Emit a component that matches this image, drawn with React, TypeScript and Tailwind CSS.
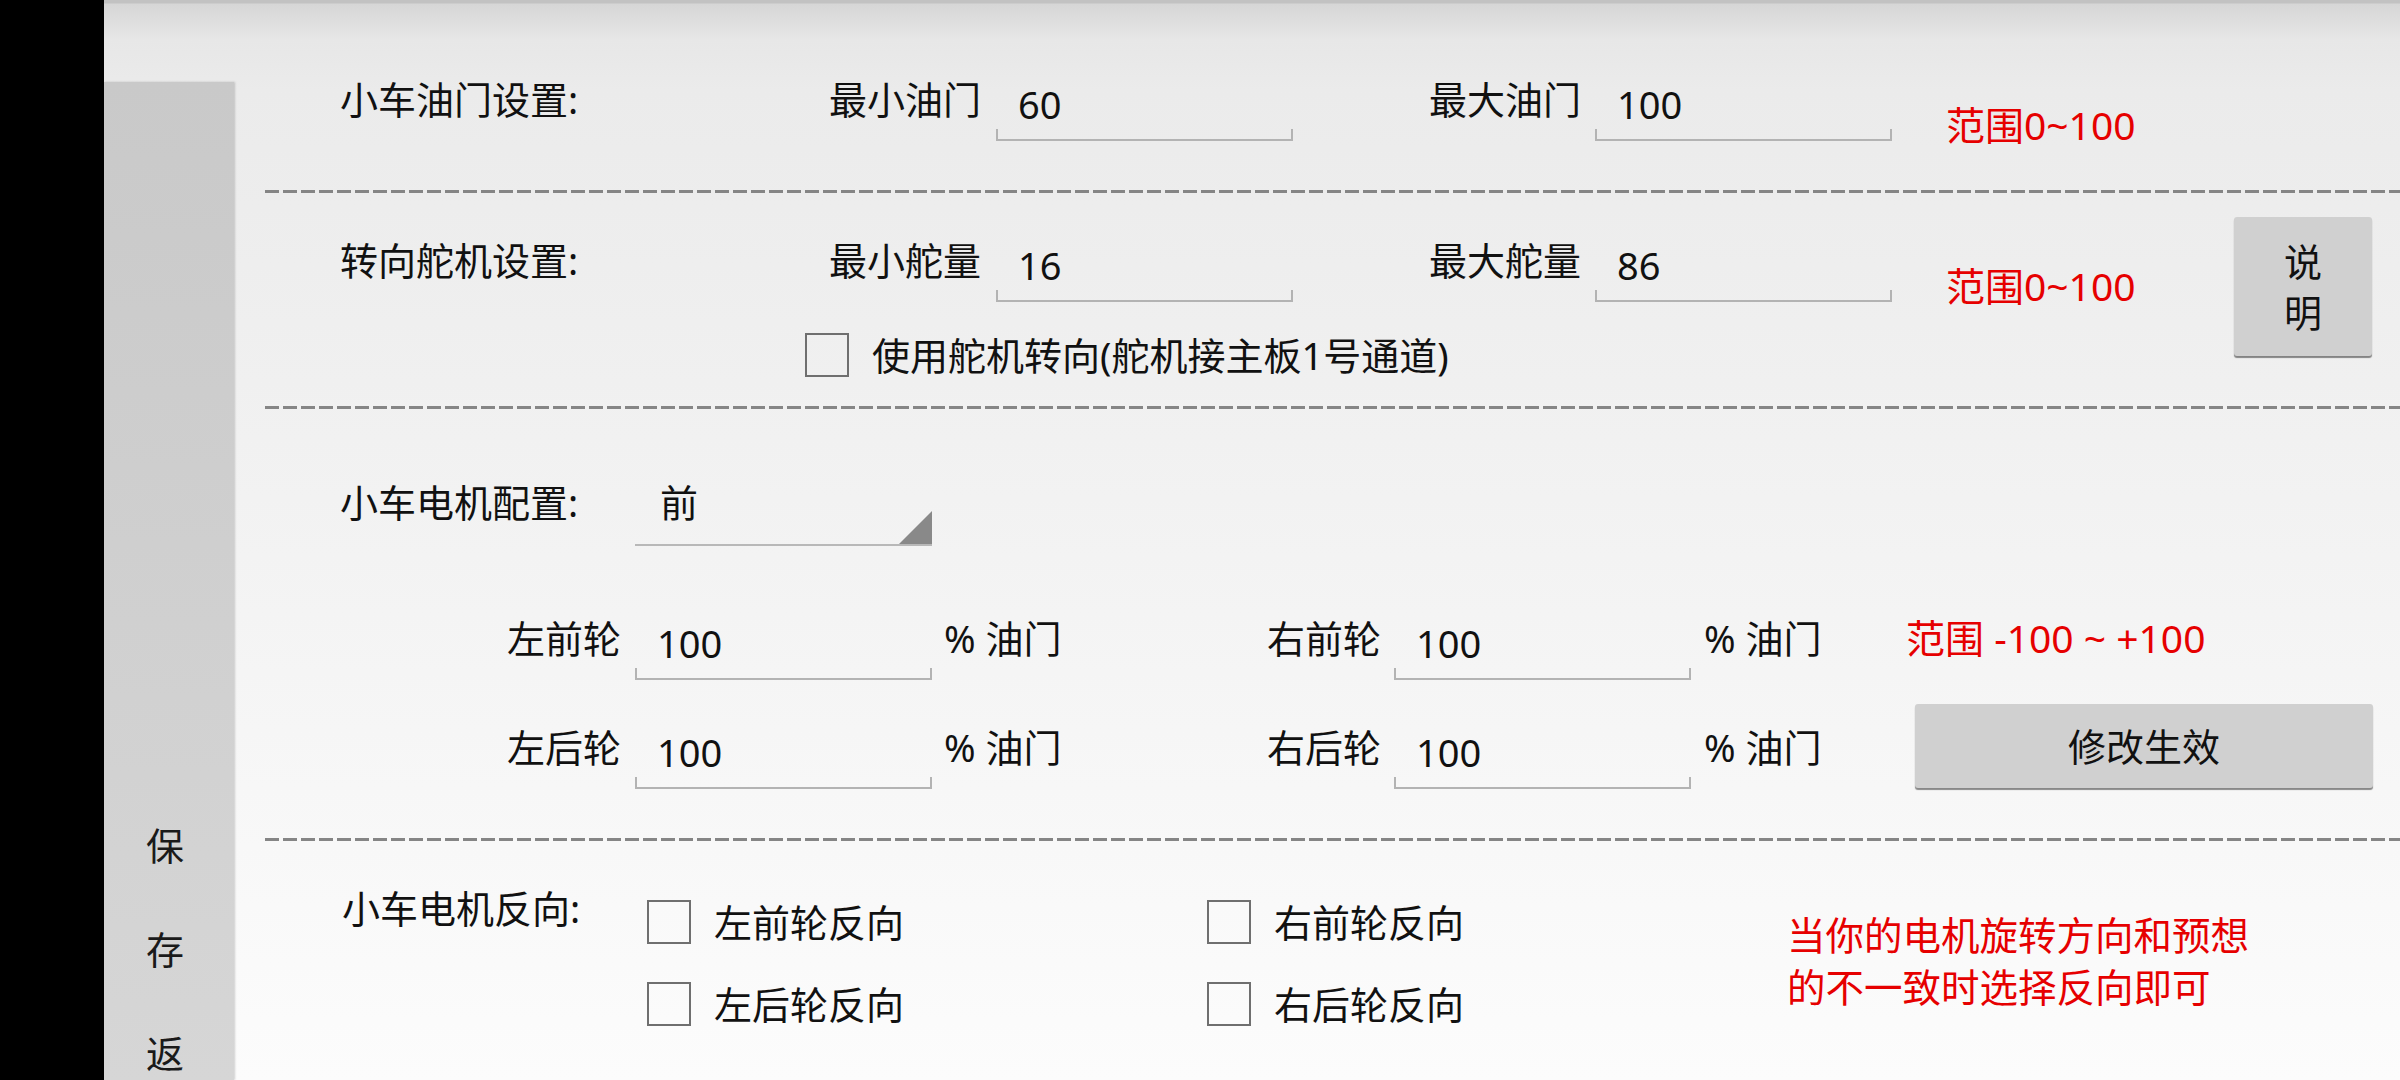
const Label = ({ text, className = "" }: { text: string; className?: string }) => (
  <div className={`shrink-0 leading-[50px] ${className}`}>{text}</div>
);

// EditText with the android underline + end ticks
const Field = ({ value }: { value: string }) => (
  <div className="flex w-[297px] shrink-0 flex-col">
    <div className="mt-[5px] h-[50px] pl-[22px] leading-[50px]">{value}</div>
    <div className="h-[12px] border-x-2 border-b-2 border-[#b3b3b3]" />
  </div>
);

const Box = () => <div className="h-[44px] w-[44px] shrink-0 border-2 border-[#6f6f6f]" />;

const Check = ({ label }: { label: string }) => (
  <div className="flex w-[560px] items-center">
    <Box />
    <span className="ml-[23px] leading-[50px]">{label}</span>
  </div>
);

const Divider = () => (
  <div className="h-[3px] shrink-0 bg-[repeating-linear-gradient(to_right,#858585_0px,#858585_14px,transparent_14px,transparent_18px)]" />
);

export default function App() {
  return (
    <div className="flex h-[1080px] w-[2400px] overflow-hidden whitespace-nowrap bg-black font-['Noto_Sans','Noto_Sans_CJK_SC',sans-serif] text-[38px] text-[#111]">
      <div className="w-[104px] shrink-0 bg-black" />

      <div className="flex flex-1 bg-[linear-gradient(to_bottom,#c2c2c2_0px,#c2c2c2_3px,#d6d6d6_4px,#e7e7e7_40px,#ebebeb_90px,#fcfcfc_1080px)]">
        {/* Side bar */}
        <aside className="mt-[82px] flex w-[130px] shrink-0 flex-col items-center overflow-hidden bg-gradient-to-b from-[#c9c9c9] to-[#d6d6d6] pr-[8px] pt-[711px] leading-[104px] text-[#1a1a1a] shadow-[1px_0_2px_rgba(0,0,0,0.18)]">
          <span>保</span>
          <span>存</span>
          <span>返</span>
        </aside>

        <main className="flex flex-1 flex-col pl-[31px]">
          {/* Throttle */}
          <section className="flex h-[190px] shrink-0 items-start pl-[75px] pt-[74px]">
            <Label text="小车油门设置:" className="w-[489px]" />
            <Label text="最小油门" className="w-[167px]" />
            <Field value="60" />
            <Label text="最大油门" className="ml-[136px] w-[166px]" />
            <Field value="100" />
            <Label text="范围0~100" className="ml-[54px] mt-[26px] text-[39px] text-[#e60000]" />
          </section>
          <Divider />

          {/* Servo */}
          <section className="flex h-[213px] shrink-0 items-start pl-[75px] pt-[24px]">
            <div className="flex flex-col pt-[18px]">
              <div className="flex h-[67px] items-start">
                <Label text="转向舵机设置:" className="w-[489px]" />
                <Label text="最小舵量" className="w-[167px]" />
                <Field value="16" />
                <Label text="最大舵量" className="ml-[136px] w-[166px]" />
                <Field value="86" />
                <Label text="范围0~100" className="ml-[54px] mt-[26px] text-[39px] text-[#e60000]" />
              </div>
              <div className="ml-[465px] mt-[28px] flex items-center">
                <Box />
                <span className="ml-[23px] leading-[50px]">使用舵机转向(舵机接主板1号通道)</span>
              </div>
            </div>
            <button className="ml-auto mr-[28px] flex h-[139px] w-[138px] flex-col items-center justify-center rounded-[3px] bg-[#d0d0d0] leading-[51px] shadow-[0_2px_1px_rgba(0,0,0,0.45)]">
              <span>说</span>
              <span>明</span>
            </button>
          </section>
          <Divider />

          {/* Motor config */}
          <section className="flex h-[429px] shrink-0 flex-col pl-[75px] pt-[68px]">
            <div className="flex items-start">
              <Label text="小车电机配置:" className="w-[295px]" />
              <div className="flex h-[69px] w-[297px] items-start justify-between border-b-2 border-[#b8b8b8]">
                <span className="pl-[25px] leading-[50px]">前</span>
                <svg className="h-[33px] w-[33px] self-end" viewBox="0 0 33 33">
                  <path d="M33 0V33H0Z" fill="#898989" />
                </svg>
              </div>
            </div>

            <div className="mt-[67px] flex items-start">
              <Label text="左前轮" className="ml-[167px] w-[128px]" />
              <Field value="100" />
              <Label text="% 油门" className="ml-[12px] w-[323px]" />
              <Label text="右前轮" className="w-[127px]" />
              <Field value="100" />
              <Label text="% 油门" className="ml-[13px] w-[202px]" />
              <Label text="范围 -100 ~ +100" className="text-[39px] text-[#e60000]" />
            </div>

            <div className="mt-[24px] flex items-start">
              <Label text="左后轮" className="ml-[167px] mt-[18px] w-[128px]" />
              <div className="mt-[18px]">
                <Field value="100" />
              </div>
              <Label text="% 油门" className="ml-[12px] mt-[18px] w-[323px]" />
              <Label text="右后轮" className="mt-[18px] w-[127px]" />
              <div className="mt-[18px]">
                <Field value="100" />
              </div>
              <Label text="% 油门" className="ml-[13px] mt-[18px] w-[202px]" />
              <button className="ml-[9px] h-[84px] w-[458px] rounded-[3px] bg-[#d0d0d0] leading-[50px] shadow-[0_2px_1px_rgba(0,0,0,0.45)]">
                修改生效
              </button>
            </div>
          </section>
          <Divider />

          {/* Motor reverse */}
          <section className="flex flex-1 items-start pl-[77px] pt-[42px]">
            <Label text="小车电机反向:" className="w-[305px]" />
            <div className="mt-[14px] flex flex-col gap-[32px]">
              <div className="flex">
                <Check label="左前轮反向" />
                <Check label="右前轮反向" />
              </div>
              <div className="flex">
                <Check label="左后轮反向" />
                <Check label="右后轮反向" />
              </div>
            </div>
            <div className="ml-[20px] mt-[26px] flex flex-col text-[38.5px] leading-[52px] text-[#e60000]">
              <span>当你的电机旋转方向和预想</span>
              <span>的不一致时选择反向即可</span>
            </div>
          </section>
        </main>
      </div>
    </div>
  );
}
